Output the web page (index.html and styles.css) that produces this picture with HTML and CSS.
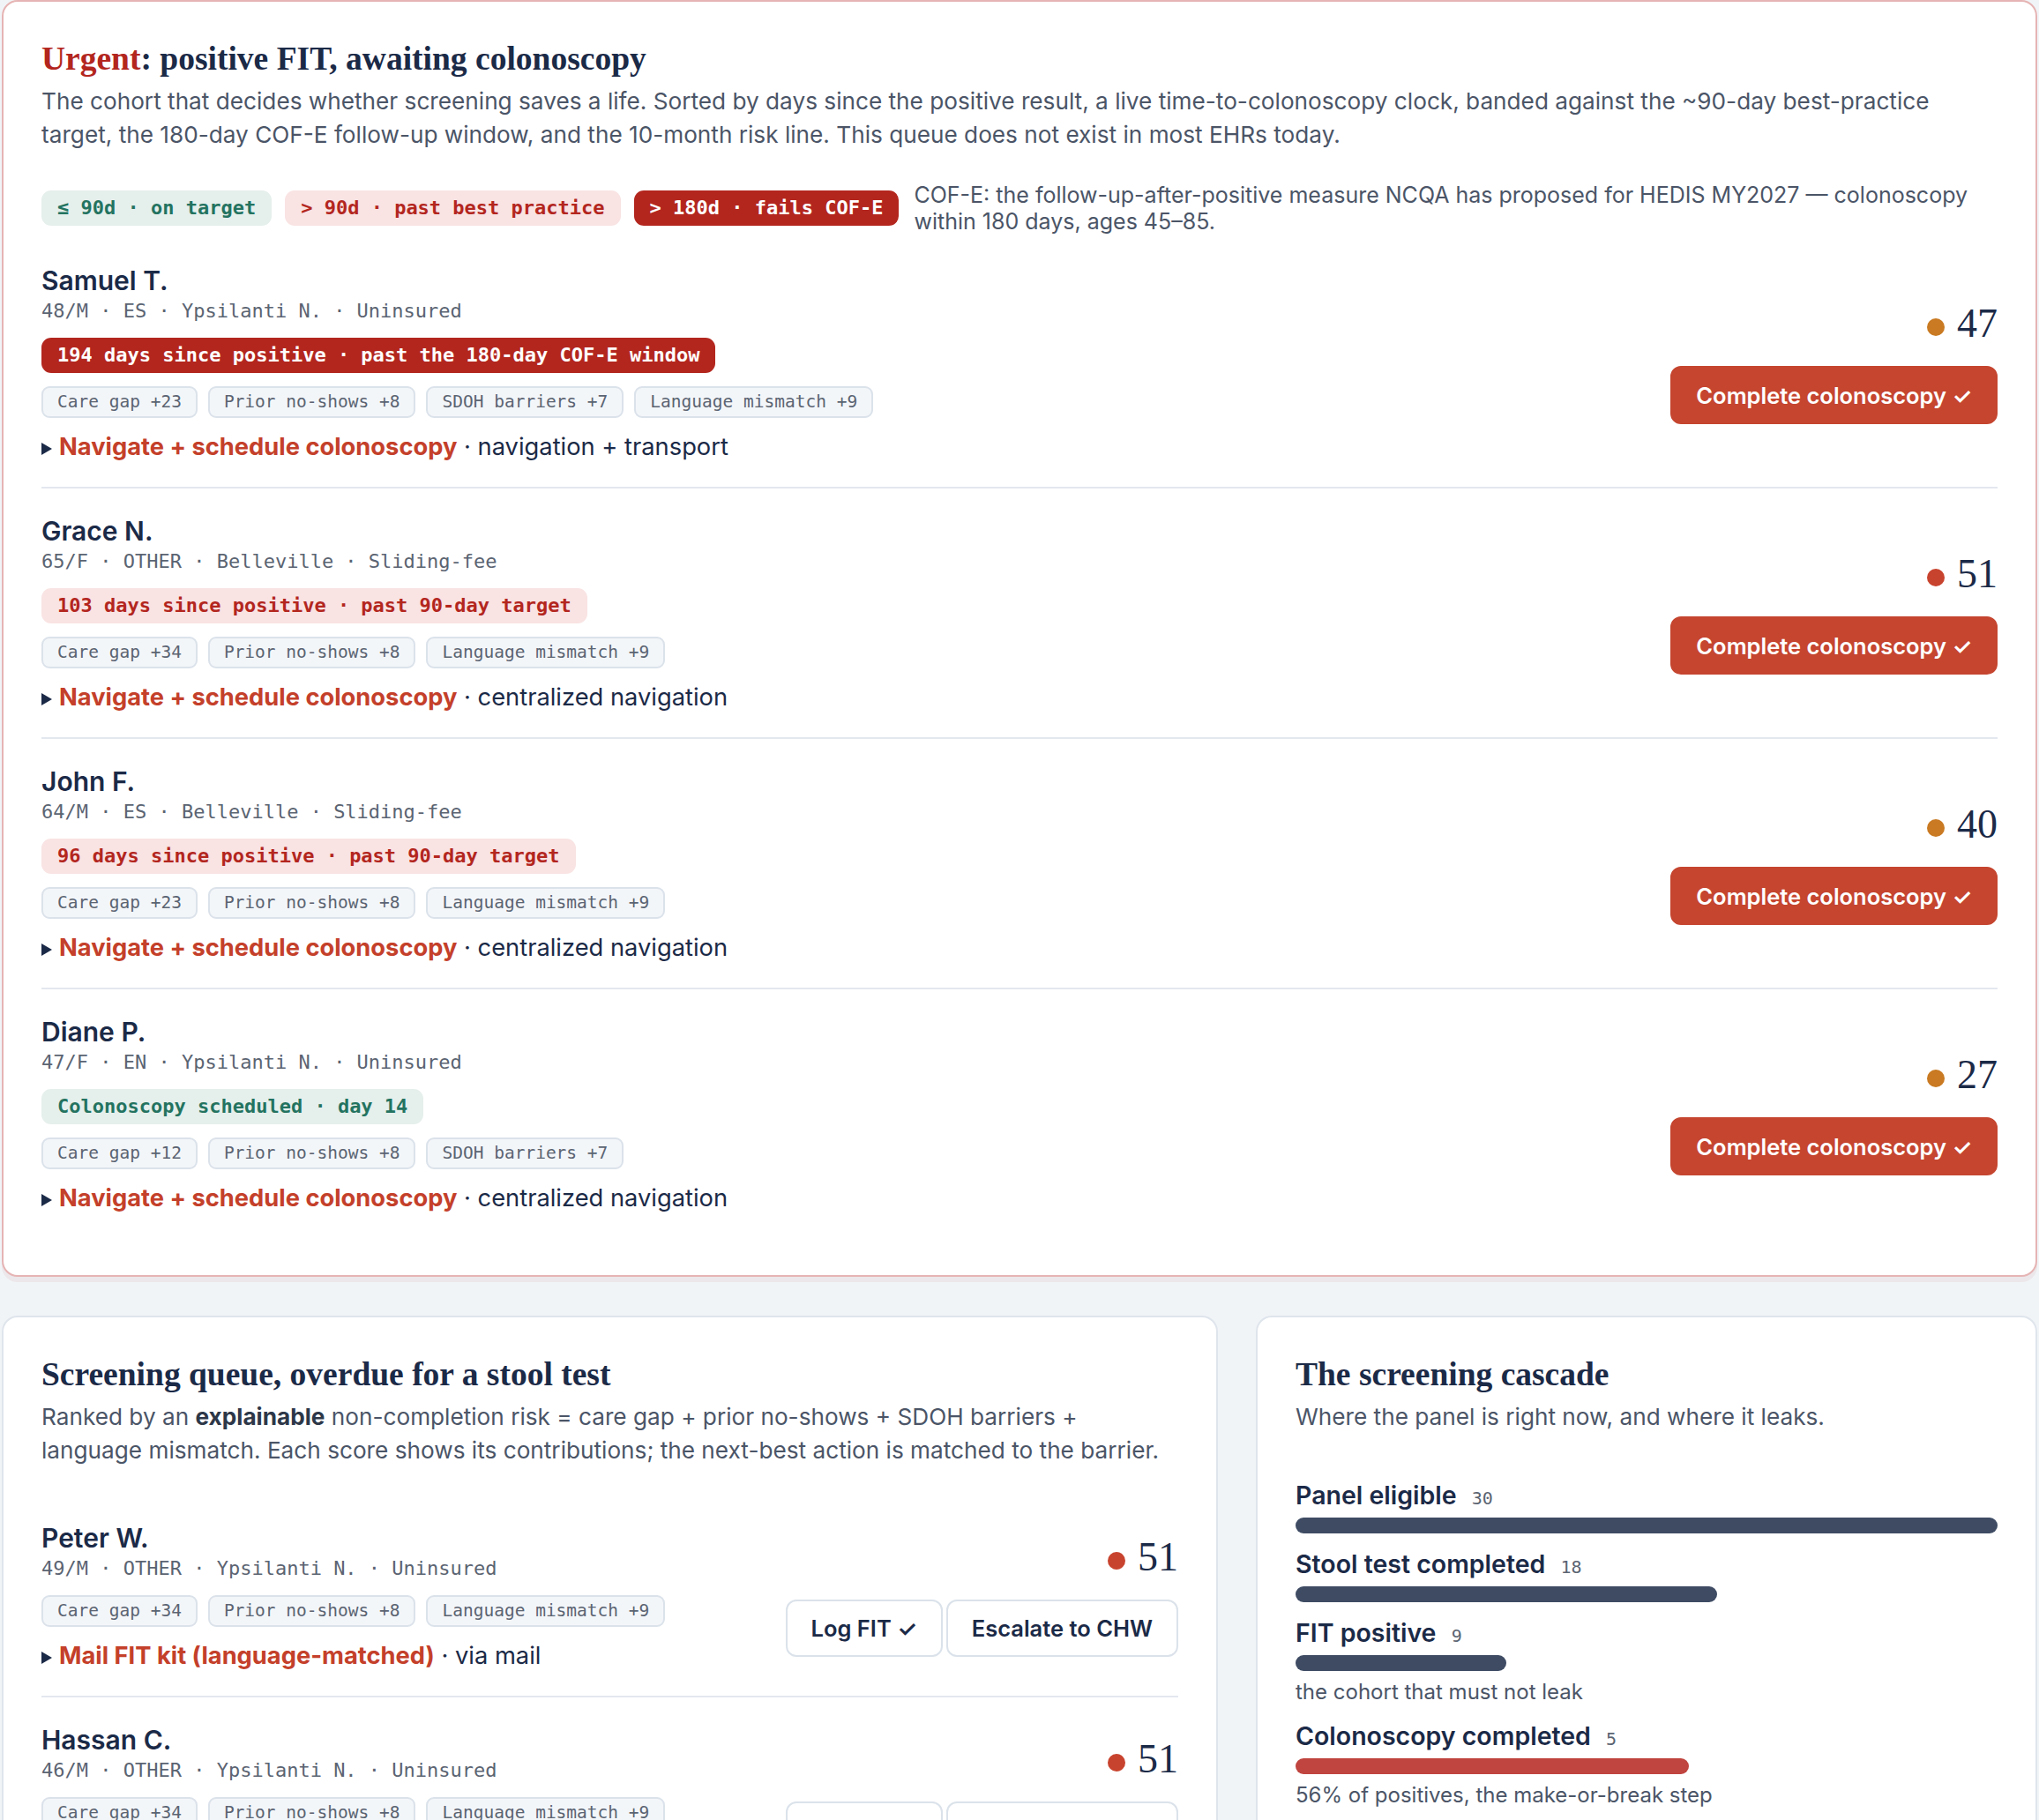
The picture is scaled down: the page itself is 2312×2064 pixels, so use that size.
FILE: index.html
```html
<!DOCTYPE html>
<html lang="en">
<head>
<meta charset="utf-8">
<title>Colorectal screening worklist</title>
<link rel="stylesheet" href="styles.css">
</head>
<body>
<main class="page">
  <section class="card card-urgent">
    <h2 class="card-title"><span class="urgent">Urgent</span>: positive FIT, awaiting colonoscopy</h2>
    <p class="card-lede">The cohort that decides whether screening saves a life. Sorted by days since the positive result, a live time-to-colonoscopy clock, banded against the ~90-day best-practice target, the 180-day COF-E follow-up window, and the 10-month risk line. This queue does not exist in most EHRs today.</p>
    <div class="legend">
      <span class="band band-ok">≤ 90d · on target</span>
      <span class="band band-warn">&gt; 90d · past best practice</span>
      <span class="band band-fail">&gt; 180d · fails COF-E</span>
      <p class="legend-note">COF-E: the follow-up-after-positive measure NCQA has proposed for HEDIS MY2027 — colonoscopy within 180 days, ages 45–85.</p>
    </div>
    <ul class="queue">
      <li class="patient">
        <div class="patient-main">
          <div class="patient-name">Samuel T.</div>
          <div class="patient-meta">48/M · ES · Ypsilanti N. · Uninsured</div>
          <div class="band clock band-fail">194 days since positive · past the 180-day COF-E window</div>
          <div class="factors"><span class="factor">Care gap +23</span><span class="factor">Prior no-shows +8</span><span class="factor">SDOH barriers +7</span><span class="factor">Language mismatch +9</span></div>
          <details class="nba"><summary><strong>Navigate + schedule colonoscopy</strong> · navigation + transport</summary></details>
        </div>
        <div class="patient-side">
          <div class="score"><span class="dot dot-amber"></span><span class="score-num">47</span></div>
          <button class="btn btn-primary">Complete colonoscopy ✓</button>
        </div>
      </li>
      <li class="patient">
        <div class="patient-main">
          <div class="patient-name">Grace N.</div>
          <div class="patient-meta">65/F · OTHER · Belleville · Sliding-fee</div>
          <div class="band clock band-warn">103 days since positive · past 90-day target</div>
          <div class="factors"><span class="factor">Care gap +34</span><span class="factor">Prior no-shows +8</span><span class="factor">Language mismatch +9</span></div>
          <details class="nba"><summary><strong>Navigate + schedule colonoscopy</strong> · centralized navigation</summary></details>
        </div>
        <div class="patient-side">
          <div class="score"><span class="dot dot-red"></span><span class="score-num">51</span></div>
          <button class="btn btn-primary">Complete colonoscopy ✓</button>
        </div>
      </li>
      <li class="patient">
        <div class="patient-main">
          <div class="patient-name">John F.</div>
          <div class="patient-meta">64/M · ES · Belleville · Sliding-fee</div>
          <div class="band clock band-warn">96 days since positive · past 90-day target</div>
          <div class="factors"><span class="factor">Care gap +23</span><span class="factor">Prior no-shows +8</span><span class="factor">Language mismatch +9</span></div>
          <details class="nba"><summary><strong>Navigate + schedule colonoscopy</strong> · centralized navigation</summary></details>
        </div>
        <div class="patient-side">
          <div class="score"><span class="dot dot-amber"></span><span class="score-num">40</span></div>
          <button class="btn btn-primary">Complete colonoscopy ✓</button>
        </div>
      </li>
      <li class="patient">
        <div class="patient-main">
          <div class="patient-name">Diane P.</div>
          <div class="patient-meta">47/F · EN · Ypsilanti N. · Uninsured</div>
          <div class="band clock band-ok">Colonoscopy scheduled · day 14</div>
          <div class="factors"><span class="factor">Care gap +12</span><span class="factor">Prior no-shows +8</span><span class="factor">SDOH barriers +7</span></div>
          <details class="nba"><summary><strong>Navigate + schedule colonoscopy</strong> · centralized navigation</summary></details>
        </div>
        <div class="patient-side">
          <div class="score"><span class="dot dot-amber"></span><span class="score-num">27</span></div>
          <button class="btn btn-primary">Complete colonoscopy ✓</button>
        </div>
      </li>
    </ul>
  </section>

  <div class="lower">
    <section class="card">
      <h2 class="card-title">Screening queue, overdue for a stool test</h2>
      <p class="card-lede">Ranked by an <b>explainable</b> non-completion risk = care gap + prior no-shows + SDOH barriers + language mismatch. Each score shows its contributions; the next-best action is matched to the barrier.</p>
      <ul class="queue queue-stool">
        <li class="patient">
          <div class="patient-main">
            <div class="patient-name">Peter W.</div>
            <div class="patient-meta">49/M · OTHER · Ypsilanti N. · Uninsured</div>
            <div class="factors"><span class="factor">Care gap +34</span><span class="factor">Prior no-shows +8</span><span class="factor">Language mismatch +9</span></div>
            <details class="nba"><summary><strong>Mail FIT kit (language-matched)</strong> · via mail</summary></details>
          </div>
          <div class="patient-side">
            <div class="score"><span class="dot dot-red"></span><span class="score-num">51</span></div>
            <div class="btn-group"><button class="btn btn-ghost">Log FIT ✓</button><button class="btn btn-ghost">Escalate to CHW</button></div>
          </div>
        </li>
        <li class="patient">
          <div class="patient-main">
            <div class="patient-name">Hassan C.</div>
            <div class="patient-meta">46/M · OTHER · Ypsilanti N. · Uninsured</div>
            <div class="factors"><span class="factor">Care gap +34</span><span class="factor">Prior no-shows +8</span><span class="factor">Language mismatch +9</span></div>
            <details class="nba"><summary><strong>Mail FIT kit (language-matched)</strong> · via mail</summary></details>
          </div>
          <div class="patient-side">
            <div class="score"><span class="dot dot-red"></span><span class="score-num">51</span></div>
            <div class="btn-group"><button class="btn btn-ghost">Log FIT ✓</button><button class="btn btn-ghost">Escalate to CHW</button></div>
          </div>
        </li>
      </ul>
    </section>

    <section class="card">
      <h2 class="card-title">The screening cascade</h2>
      <p class="card-lede">Where the panel is right now, and where it leaks.</p>
      <div class="cascade">
        <div class="step">
          <div class="step-label">Panel eligible <span class="step-count">30</span></div>
          <div class="bar" style="width: 100%"></div>
        </div>
        <div class="step">
          <div class="step-label">Stool test completed <span class="step-count">18</span></div>
          <div class="bar" style="width: 60%"></div>
        </div>
        <div class="step">
          <div class="step-label">FIT positive <span class="step-count">9</span></div>
          <div class="bar" style="width: 30%"></div>
          <div class="step-note">the cohort that must not leak</div>
        </div>
        <div class="step">
          <div class="step-label">Colonoscopy completed <span class="step-count">5</span></div>
          <div class="bar bar-leak" style="width: 56%"></div>
          <div class="step-note">56% of positives, the make-or-break step</div>
        </div>
      </div>
    </section>
  </div>
</main>
</body>
</html>
```

FILE: styles.css
```css
* { box-sizing: border-box; }

html, body {
  margin: 0;
  padding: 0;
}

body {
  background: #f1f4f7;
  font-family: Inter, "Noto Sans", "Liberation Sans", sans-serif;
  color: #1b2a47;
}

.page {
  width: 2310px;
  padding-left: 2px;
  display: flex;
  flex-direction: column;
  gap: 44px;
}

.card {
  background: #ffffff;
  border: 2px solid #dfe5ec;
  border-radius: 18px;
  padding: 43px;
}

.card-urgent {
  border-color: #e6b4b4;
  padding-bottom: 42px;
  box-shadow: 0 6px 0 #ece7ea;
}

.card-title {
  margin: 0;
  font-family: "Liberation Serif", "Times New Roman", serif;
  font-weight: 700;
  font-size: 37.5px;
  line-height: 43px;
  color: #1b2a47;
}

.urgent { color: #b3261e; }

.card-lede {
  margin: 8px 0 0;
  font-size: 26.2px;
  line-height: 38px;
  color: #4b5567;
}

.card-lede b {
  font-weight: 700;
  color: #2d3748;
}

/* legend */
.legend {
  display: flex;
  align-items: center;
  gap: 15px;
  margin: 34px 0 4px;
}

.band {
  font-family: "DejaVu Sans Mono", "Liberation Mono", monospace;
  font-weight: 700;
  font-size: 22px;
  line-height: 40px;
  height: 40px;
  padding: 0 18px;
  border-radius: 11px;
  white-space: nowrap;
  flex-shrink: 0;
}

.band-ok { background: #e5efec; color: #237360; }
.band-warn { background: #f9e3e3; color: #b3261e; }
.band-fail { background: #b3261e; color: #ffffff; }

.legend-note {
  margin: 0 0 0 2px;
  flex: 1;
  font-size: 25px;
  line-height: 30px;
  color: #4b5567;
}

/* queue */
.queue {
  list-style: none;
  margin: 0;
  padding: 0;
}

.queue-stool { margin-top: 32px; }

.patient {
  display: flex;
  align-items: center;
  justify-content: space-between;
  gap: 40px;
  padding: 28px 0 25px;
  border-bottom: 2px solid #e3e8ef;
}

.patient:last-child { border-bottom: 0; }

.patient-main {
  display: flex;
  flex-direction: column;
  align-items: flex-start;
  min-width: 0;
}

.patient-name {
  font-size: 30px;
  font-weight: 600;
  line-height: 40px;
  color: #1b2a47;
}

.patient-meta {
  font-family: "DejaVu Sans Mono", "Liberation Mono", monospace;
  font-size: 22px;
  line-height: 30px;
  color: #5b6472;
}

.clock { margin-top: 15px; }

.factors {
  display: flex;
  flex-wrap: wrap;
  gap: 12px;
  margin-top: 15px;
}

.factor {
  font-family: "DejaVu Sans Mono", "Liberation Mono", monospace;
  font-size: 19.5px;
  line-height: 32px;
  padding: 0 16px;
  border: 2px solid #dbe2ea;
  border-radius: 9px;
  background: #f3f6f9;
  color: #5b6472;
  white-space: nowrap;
}

.nba {
  margin-top: 13px;
  font-size: 27.3px;
  line-height: 40px;
  color: #1b2a47;
}

.nba summary {
  cursor: pointer;
  list-style: none;
}

.nba summary::-webkit-details-marker { display: none; }

.nba summary::before {
  content: "";
  display: inline-block;
  width: 0;
  height: 0;
  border-left: 12px solid #1b2a47;
  border-top: 7px solid transparent;
  border-bottom: 7px solid transparent;
  margin: 0 8px 0 0;
  vertical-align: baseline;
}

.nba strong {
  font-weight: 700;
  color: #c4402a;
}

.patient-side {
  display: flex;
  flex-direction: column;
  align-items: flex-end;
  gap: 25px;
  flex-shrink: 0;
}

.score {
  display: flex;
  align-items: center;
  gap: 14px;
  height: 46px;
}

.score-num {
  font-family: "Liberation Serif", "Times New Roman", serif;
  font-size: 46px;
  line-height: 46px;
  color: #1b2a47;
}

.dot {
  width: 20px;
  height: 20px;
  border-radius: 50%;
  margin-top: 8px;
}

.dot-amber { background: #c97a22; }
.dot-red { background: #c8432e; }

.btn {
  height: 66px;
  padding: 0 27px;
  border-radius: 12px;
  border: 2px solid transparent;
  font-family: Inter, "Noto Sans", sans-serif;
  font-weight: 600;
  font-size: 25.5px;
  white-space: nowrap;
  cursor: pointer;
}

.btn-primary {
  background: #c5452f;
  border-color: #c5452f;
  color: #ffffff;
}

.btn-ghost {
  background: #ffffff;
  border-color: #dbe2ea;
  color: #1b2a47;
  height: 65px;
}

.btn-group {
  display: flex;
  gap: 4px;
}

/* lower grid */
.lower {
  display: grid;
  grid-template-columns: minmax(0, 1fr) 886px;
  gap: 43px;
  align-items: start;
}

/* cascade */
.cascade {
  margin-top: 53px;
  display: flex;
  flex-direction: column;
  gap: 18px;
}

.step-label {
  font-size: 28.5px;
  font-weight: 600;
  line-height: 34px;
  color: #1b2a47;
}

.step-count {
  margin-left: 10px;
  font-family: "DejaVu Sans Mono", "Liberation Mono", monospace;
  font-size: 20px;
  font-weight: 400;
  line-height: 1;
  color: #5b6472;
}

.bar {
  height: 18px;
  margin-top: 8px;
  border-radius: 9px;
  background: #3e4b63;
}

.bar-leak { background: #c0443f; }

.step-note {
  margin-top: 8px;
  font-size: 24px;
  line-height: 31px;
  color: #4b5567;
}
```
